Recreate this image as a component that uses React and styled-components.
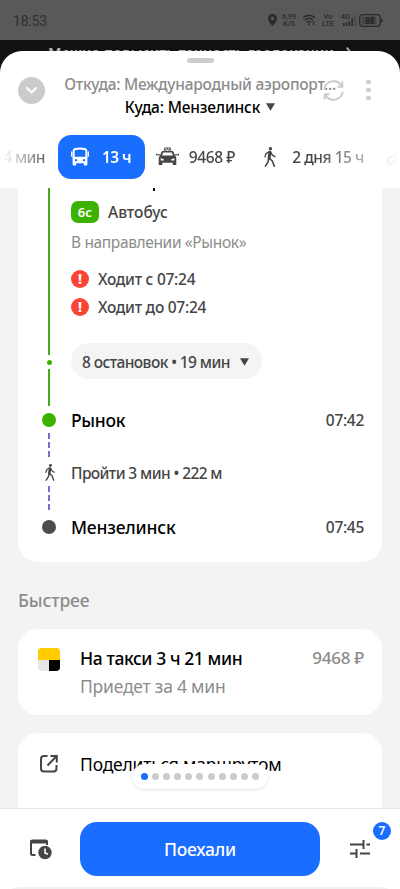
import { createGlobalStyle, styled } from "styled-components";

const GlobalStyle = createGlobalStyle`
  * { box-sizing: border-box; }
  body {
    margin: 0;
    background: #f3f3f3;
    font-family: "Noto Sans", "Open Sans", sans-serif;
  }
`;

const Screen = styled.div`
  width: 400px;
  height: 889px;
  display: flex;
  flex-direction: column;
  overflow: hidden;
  background: #f3f3f3;
`;

const StatusBar = styled.div`
  height: 40px;
  flex: none;
  display: flex;
  align-items: center;
  justify-content: space-between;
  padding: 0 17px 0 13px;
  background: #595959;
  color: #2f2f2f;
  font-family: Roboto, sans-serif;
`;

const Clock = styled.span`
  font-size: 14px;
  letter-spacing: -0.2px;
  line-height: 40px;
  padding-top: 1px;
`;

const StatusIcons = styled.div`
  display: flex;
  align-items: center;
`;

const Tiny = styled.span`
  width: ${(p) => p.$width}px;
  margin-left: ${(p) => p.$gap}px;
  font-size: 7.5px;
  font-weight: 600;
  line-height: 7px;
  text-align: center;
  white-space: pre-line;
`;

const Top = styled.div`
  height: 148px;
  flex: none;
  display: flex;
  flex-direction: column;
  overflow: hidden;
  background: #111;
`;

const Notice = styled.div`
  height: 11px;
  flex: none;
  display: flex;
  justify-content: center;
  gap: 12px;
  overflow: hidden;
  color: #b5b5b5;
  font-size: 14.5px;
  font-weight: 600;
  line-height: 24px;
  white-space: nowrap;
`;

const Sheet = styled.div`
  flex: 1;
  display: flex;
  flex-direction: column;
  border-radius: 22px 22px 0 0;
  background: #fff;
`;

const Grip = styled.div`
  width: 27px;
  height: 5px;
  margin: 6.5px auto 0;
  border-radius: 3px;
  background: #cdcdcd;
`;

const Header = styled.div`
  height: 55px;
  display: grid;
  grid-template-columns: 44px 276px 1fr;
  padding: 0 0 0 18px;
  margin-top: 9px;
`;

const RoundButton = styled.div`
  width: 27px;
  height: 27px;
  margin-top: 5.5px;
  border-radius: 50%;
  background: #cbcbcb;
  display: flex;
  align-items: center;
  justify-content: center;
`;

const Addresses = styled.div`
  display: flex;
  flex-direction: column;
  align-items: center;
  white-space: nowrap;
`;

const Text = styled.span`
  font-size: ${(p) => p.$size || 15.5}px;
  font-weight: ${(p) => p.$weight || 400};
  letter-spacing: ${(p) => p.$track || 0}px;
  line-height: ${(p) => p.$line || 24}px;
  color: ${(p) => p.$color || "#454545"};
  white-space: nowrap;
`;

const Inline = styled.div`
  display: flex;
  align-items: center;
  gap: ${(p) => p.$gap || 0}px;
`;

const HeaderActions = styled.div`
  display: flex;
  align-items: flex-start;
  gap: 22px;
  margin-left: -15px;
  padding-top: 8px;
`;

const Tabs = styled.div`
  display: flex;
  align-items: center;
  height: 44px;
  margin-top: 8px;
  overflow: hidden;
  mask-image: linear-gradient(90deg, transparent 2px, #000 56px, #000 315px, transparent 398px);
`;

const Tab = styled.div`
  width: ${(p) => p.$width}px;
  height: 44px;
  flex: none;
  display: flex;
  align-items: center;
  justify-content: space-between;
  margin-left: ${(p) => p.$gap}px;
  padding: 0 ${(p) => (p.$active ? "14px 0 13px" : "0")};
  border-radius: 13px;
  background: ${(p) => (p.$active ? "#196dff" : "transparent")};
`;

const Content = styled.div`
  flex: 1;
  min-height: 0;
  overflow: hidden;
  padding: 0 18px;
`;

const RouteCard = styled.div`
  height: 374px;
  padding: 0 18px;
  border-radius: 0 0 20px 20px;
  background: #fff;
`;

const RouteRow = styled.div`
  height: ${(p) => p.$height}px;
  display: grid;
  grid-template-columns: 26px 1fr auto;
  column-gap: 9px;
  align-items: ${(p) => p.$align || "center"};
`;

const Rail = styled.div`
  display: flex;
  flex-direction: column;
  align-items: center;
`;

const Line = styled.div`
  width: 2.4px;
  height: ${(p) => p.$height}px;
  background: #43ad1c;
`;

const Dot = styled.div`
  width: ${(p) => p.$size}px;
  height: ${(p) => p.$size}px;
  margin: ${(p) => p.$margin || 0}px 0;
  border-radius: 50%;
  background: ${(p) => p.$color};
`;

const Dashes = styled.div`
  width: 2.4px;
  height: 24px;
  background: repeating-linear-gradient(#7272cc 0 6px, transparent 6px 9px);
`;

const RailIcon = styled.div`
  height: 29px;
  display: flex;
  align-items: center;
  padding: 1px 0 0 2px;
`;

const Leg = styled.div`
  display: flex;
  flex-direction: column;
  align-items: flex-start;
`;

// tail of the stop name that is scrolled under the sheet header
const ScrolledName = styled.div`
  width: 2px;
  height: 3px;
  margin-left: 82px;
  background: #111;
`;

const LineBadge = styled.div`
  width: 27.5px;
  height: 22px;
  display: flex;
  align-items: center;
  justify-content: center;
  border-radius: 7px;
  background: #3cb200;
`;

const LegName = styled(Inline)`
  height: 22px;
  margin-top: 10px;
`;

const Direction = styled.div`
  height: 24px;
  margin: 7px 0 10.5px;
`;

const Alert = styled(Inline)`
  height: 28.5px;
`;

const AlertMark = styled.div`
  width: 18px;
  height: 18px;
  display: flex;
  justify-content: center;
  border-radius: 50%;
  background: #fc4436;
  color: #fff;
  font-size: 14px;
  font-weight: 800;
  line-height: 18px;
`;

const StopsChip = styled.div`
  width: 191px;
  height: 36px;
  display: flex;
  align-items: center;
  justify-content: space-between;
  margin-top: 21.5px;
  padding: 1px 13px 0 11px;
  border-radius: 18px;
  background: #f4f4f4;
`;

const WalkInfo = styled.div`
  padding-top: 2px;
`;

const SectionTitle = styled.div`
  height: 24px;
  margin: 26px 0 17px;
`;

const Card = styled.div`
  height: ${(p) => p.$height}px;
  display: grid;
  grid-template-columns: 44px 1fr auto;
  align-items: start;
  padding: ${(p) => p.$top || 17}px 18px 0;
  margin-bottom: 18px;
  border-radius: 20px;
  background: #fff;
`;

const CardIcon = styled.div`
  display: flex;
  padding: 1px 0 0 1.5px;
`;

const TaxiLogo = styled.div`
  width: 22.5px;
  height: 22.5px;
  margin-top: 1px;
  display: grid;
  grid-template-columns: 1fr 1fr;
  grid-template-rows: 12px 11px;
  border-radius: 4px;
  overflow: hidden;
  background: #e6e6e6;

  &::before {
    content: "";
    grid-column: 1 / 3;
    background: #ffcc00;
  }

  &::after {
    content: "";
    grid-column: 2;
    background: #000;
  }
`;

const Stack = styled.div`
  display: flex;
  flex-direction: column;
  gap: 4px;
`;

const Footer = styled.div`
  position: relative;
  height: 81px;
  flex: none;
  display: grid;
  grid-template-columns: 80px 240px 80px;
  grid-template-rows: 54px;
  padding-top: 13px;
  align-items: center;
  justify-items: center;
  border-top: 1px solid #e6e6e6;
  background: #fff;
`;

const Pager = styled.div`
  position: absolute;
  left: 132px;
  top: -45px;
  width: 136px;
  height: 25px;
  display: flex;
  align-items: center;
  justify-content: space-between;
  padding: 0 9px;
  border-radius: 13px;
  background: #fff;
  box-shadow: 0 1px 3px rgba(0, 0, 0, 0.12);
`;

const GoButton = styled.div`
  width: 240px;
  height: 54px;
  display: flex;
  align-items: center;
  justify-content: center;
  border-radius: 17px;
  background: #196dff;
`;

const CountBadge = styled.div`
  position: absolute;
  left: 373px;
  top: 13px;
  width: 18px;
  height: 18px;
  border-radius: 50%;
  background: #196dff;
  color: #fff;
  font-size: 12px;
  font-weight: 600;
  line-height: 18px;
  text-align: center;
`;

const NextPanel = styled.div`
  position: absolute;
  left: 0;
  bottom: -20px;
  width: 400px;
  height: 22px;
  border-radius: 20px 20px 0 0;
  background: #f1f1f1;
`;

const More = styled.div`
  display: flex;
  flex-direction: column;
  gap: 3.5px;
`;

const Triangle = () => (
  <svg width="9" height="8" viewBox="0 0 9 8">
    <path d="M0 0.3h9L4.5 7.8Z" fill="#454545" />
  </svg>
);

const Walker = ({ height = 20, color = "#454545" }) => (
  <svg width={height * 0.6} height={height} viewBox="0 0 12 20" fill="none" stroke={color} strokeLinecap="round" strokeLinejoin="round">
    <circle cx="6.4" cy="1.8" r="1.7" fill={color} stroke="none" />
    <path d="M5.9 5.2 5.1 11.2" strokeWidth="3" />
    <path d="M5 4.8 1.8 6.8 1.1 9.8M6.8 5.3 8.4 8.2 11 9.6" strokeWidth="1.4" />
    <path d="M5.6 11.5 8.4 14.2 10.3 19.1M4.6 11.5 4.2 14.6 1.4 19.1" strokeWidth="1.6" />
  </svg>
);

const Bus = () => (
  <svg width="18" height="19" viewBox="0 0 18 19">
    <path d="M2.600 10.500V4.200Q2.600 2.400 4.300 2 9 .9 13.700 2q1.700.4 1.700 2.200v6.300" fill="none" stroke="#fff" strokeWidth="2" />
    <path d="M.7 4.800v4.400M17.300 4.800v4.400" stroke="#fff" strokeWidth="1.300" strokeLinecap="round" />
    <path fillRule="evenodd" d="M1.600 9.800h14.800V17.500q0 1-1 1h-1.600q-1 0-1-1v-1.300H5.200v1.300q0 1-1 1H2.600q-1 0-1-1ZM5 11.900a1.200 1.200 0 1 0 .01 0ZM13 11.900a1.200 1.200 0 1 0 .01 0Z" fill="#fff" />
  </svg>
);

const Taxi = () => (
  <svg width="23" height="19" viewBox="0 0 23 19" fill="#454545">
    <path d="M7.600 3.600 8.600.6h5.800l1 3Z" />
    <path d="M9.400 1.300h1.400v1.100H9.400ZM12.200 1.300h1.400v1.100h-1.400ZM10.800 2.400h1.400v1h-1.400Z" fill="#fff" />
    <path fillRule="evenodd" d="M7 4h9q1.200 0 1.700 1.200l1.200 3.100q1.400 1.400 1.400 3.200V18h-3.600v-2.300H6.300V18H2.700v-6.500q0-1.800 1.400-3.200l1.200-3.100Q5.800 4 7 4ZM7.200 5.600 6 8.600h11l-1.200-3ZM4.700 11l3.200 1.500v1H4.700ZM18.300 11l-3.200 1.500v1h3.200Z" />
    <path d="M0 6.700h1.600v1.800H0ZM21.400 6.700H23v1.800h-1.600ZM2.200 7h1.800l-.6 1.500H2.200ZM20.800 7H19l.6 1.500h1.200Z" />
  </svg>
);

const Bike = () => (
  <svg width="24" height="18" viewBox="0 0 24 18" fill="none" stroke="#454545" strokeWidth="1.600">
    <circle cx="5" cy="12.500" r="4" />
    <circle cx="19" cy="12.500" r="4" />
    <path d="M5 12.500H12L16 4h2M7 9 9 5M7 5h4" />
  </svg>
);

const Refresh = () => (
  <svg width="21" height="21" viewBox="0 0 21 21" fill="none" stroke="#cbcbcb" strokeWidth="1.900">
    <path d="M1.300 9.500A9.200 9.200 0 0 1 18.500 6M19.700 11.500A9.200 9.200 0 0 1 2.500 15" />
    <path d="M19.300 1.500V6.700H14.500M1.700 19.500v-5.200h4.800" />
  </svg>
);

export default function App() {
  return (
    <Screen>
      <GlobalStyle />
      <StatusBar>
        <Clock>18:53</Clock>
        <StatusIcons>
          <svg width="9" height="12" viewBox="0 0 9 12">
            <path fillRule="evenodd" d="M4.500 0A4.400 4.400 0 0 1 9 4.500C9 7.500 4.500 12 4.500 12S0 7.500 0 4.500A4.400 4.400 0 0 1 4.500 0ZM4.500 2.800a1.700 1.700 0 1 0 .01 0Z" fill="#2b2b2b" />
          </svg>
          <Tiny $width={16} $gap={4.5}>{"6,99\nK/S"}</Tiny>
          <svg width="14" height="12" viewBox="0 0 14 12" fill="none" stroke="#2b2b2b" strokeWidth="1.300" style={{ marginLeft: 4.5 }}>
            <path d="M.7 4Q7-1.500 13.300 4M2.600 6.300Q7 2.300 11 6.100M4.500 8.500Q7 6.300 9 8.300" />
            <circle cx="6.800" cy="10.200" r="1" fill="#2b2b2b" stroke="none" />
            <path d="M11.500 7v4" />
          </svg>
          <Tiny $width={13} $gap={6}>{"Vo\nLTE"}</Tiny>
          <Tiny $width={10} $gap={6}>{"4G\n\u00a0"}</Tiny>
          <svg width="13" height="12" viewBox="0 0 13 12" fill="#2b2b2b" style={{ marginLeft: -8 }}>
            <path d="M0 9h1.600v3H0ZM2.800 8h1.600v4H2.800ZM5.600 7h1.600v5H5.600ZM8.400 4H10v8H8.400Z" />
            <path d="M11.400 1H13v11h-1.600Z" opacity=".4" />
          </svg>
          <svg width="24" height="13" viewBox="0 0 24 13" style={{ marginLeft: 3.5 }}>
            <rect x=".7" y=".7" width="20.600" height="11.600" rx="3" fill="none" stroke="#2b2b2b" strokeWidth="1.300" />
            <rect x="2.500" y="2.500" width="15" height="8" rx="1" fill="#474747" />
            <path d="M22 4.500q1.500 0 1.500 2t-1.500 2Z" fill="#2b2b2b" />
            <text x="10.800" y="9.500" textAnchor="middle" fontSize="8.500" fontWeight="700" fill="#222">88</text>
          </svg>
        </StatusIcons>
      </StatusBar>

      <Top>
        <Notice>
          <span>Можно повысить точность геолокации</span>
          <svg width="6" height="12" viewBox="0 0 6 12" fill="none" stroke="#b5b5b5" strokeWidth="1.800" style={{ marginTop: 7 }}>
            <path d="M.7.7 5 5.500.7 10.500" />
          </svg>
        </Notice>
        <Sheet>
          <Grip />
          <Header>
            <RoundButton>
              <svg width="11" height="7" viewBox="0 0 11 7" fill="none" stroke="#fff" strokeWidth="2" strokeLinecap="round" strokeLinejoin="round">
                <path d="M1 1 5.500 5.500 10 1" />
              </svg>
            </RoundButton>
            <Addresses>
              <Text $color="#8c8c8c" $weight={500} $track={-0.26}>Откуда: Международный аэропорт...</Text>
              <Inline $gap={6}>
                <Text $color="#000" $weight={500} $track={-0.17} $line={23}>Куда: Мензелинск</Text>
                <Triangle />
              </Inline>
            </Addresses>
            <HeaderActions>
              <Refresh />
              <More>
                <Dot $size={4.5} $color="#cbcbcb" />
                <Dot $size={4.5} $color="#cbcbcb" />
                <Dot $size={4.5} $color="#cbcbcb" />
              </More>
            </HeaderActions>
          </Header>
          <Tabs>
            <Tab $width={49} $gap={-5}>
              <Text $weight={500} $track={-0.6}>24 мин</Text>
            </Tab>
            <Tab $width={87} $gap={14} $active>
              <Bus />
              <Text $size={15.5} $weight={600} $track={-0.6} $color="#fff">13 ч</Text>
            </Tab>
            <Tab $width={79} $gap={11}>
              <Taxi />
              <Text $weight={500} $track={-0.4}>9468 ₽</Text>
            </Tab>
            <Tab $width={100} $gap={29}>
              <Walker height={20} />
              <Text $weight={500} $track={-0.45}>2 дня 15 ч</Text>
            </Tab>
            <Tab $width={24} $gap={23}>
              <Bike />
            </Tab>
          </Tabs>
        </Sheet>
      </Top>

      <Content>
        <RouteCard>
          <RouteRow $height={218} $align="start">
            <Rail>
              <Line $height={167} />
              <Dot $size={5} $margin={4.5} $color="#3cb200" />
              <Line $height={37} />
            </Rail>
            <Leg>
              <ScrolledName />
              <LegName $gap={9.5}>
                <LineBadge>
                  <Text $size={13} $weight={600} $color="#fff">6с</Text>
                </LineBadge>
                <Text $weight={500} $track={0}>Автобус</Text>
              </LegName>
              <Direction>
                <Text $color="#8c8c8c" $track={-0.36}>В направлении «Рынок»</Text>
              </Direction>
              <Alert $gap={9}>
                <AlertMark>!</AlertMark>
                <Text $weight={500} $track={-0.26}>Ходит с 07:24</Text>
              </Alert>
              <Alert $gap={9}>
                <AlertMark>!</AlertMark>
                <Text $weight={500} $track={-0.26}>Ходит до 07:24</Text>
              </Alert>
              <StopsChip>
                <Text $weight={500} $track={-0.58}>8 остановок • 19 мин</Text>
                <Triangle />
              </StopsChip>
            </Leg>
          </RouteRow>
          <RouteRow $height={27}>
            <Rail>
              <Dot $size={14} $color="#3cb200" />
            </Rail>
            <Text $size={17.5} $weight={500} $track={-0.3} $color="#000">Рынок</Text>
            <Text $weight={500} $track={-0.3}>07:42</Text>
          </RouteRow>
          <RouteRow $height={77}>
            <Rail>
              <Dashes />
              <RailIcon>
                <Walker height={17} />
              </RailIcon>
              <Dashes />
            </Rail>
            <WalkInfo>
              <Text $weight={500} $track={-0.6}>Пройти 3 мин • 222 м</Text>
            </WalkInfo>
          </RouteRow>
          <RouteRow $height={33}>
            <Rail>
              <Dot $size={14} $color="#4d4d4d" />
            </Rail>
            <Text $size={17.5} $weight={500} $track={-0.2} $color="#000">Мензелинск</Text>
            <Text $weight={500} $track={-0.3}>07:45</Text>
          </RouteRow>
        </RouteCard>

        <SectionTitle>
          <Text $size={17.5} $color="#8c8c8c" $weight={500} $track={-0.1}>Быстрее</Text>
        </SectionTitle>

        <Card $height={86}>
          <CardIcon>
            <TaxiLogo />
          </CardIcon>
          <Stack>
            <Text $size={17.5} $weight={500} $track={-0.4} $color="#000">На такси 3 ч 21 мин</Text>
            <Text $size={17.5} $track={-0.22} $color="#8c8c8c">Приедет за 4 мин</Text>
          </Stack>
          <Text $size={17} $weight={500} $track={-0.25} $color="#8c8c8c">9468 ₽</Text>
        </Card>

        <Card $height={96} $top={18.5}>
          <CardIcon>
            <svg width="22" height="22" viewBox="0 0 22 22" fill="none" stroke="#454545" strokeWidth="2">
              <path d="M9.500 3H6Q3 3 3 6v9.500q0 3 3 3h9.500q3 0 3-3V12" />
              <path d="M9.500 12.500 18.500 3.200M12.500 3h6.300V9.500" />
            </svg>
          </CardIcon>
          <Text $size={17.5} $track={-0.2} $color="#000">Поделиться маршрутом</Text>
        </Card>
      </Content>

      <Footer>
        <svg width="24" height="22" viewBox="0 0 24 22">
          <path d="M7.500 17H4.500Q3 17 3 15.500V3.500H19V7" fill="none" stroke="#454545" strokeWidth="2" />
          <path d="M2 4.500Q2 1.500 4.500 1.500h13Q20 1.500 20 4v1.500H2Z" fill="#454545" />
          <circle cx="17" cy="14.500" r="6.700" fill="#454545" />
          <path d="M17 10.500v4.500l3 1.200" fill="none" stroke="#fff" strokeWidth="1.600" />
        </svg>
        <GoButton>
          <Text $size={17.5} $weight={500} $track={-0.2} $color="#fff">Поехали</Text>
        </GoButton>
        <svg width="20" height="18" viewBox="0 0 20 18" fill="none" stroke="#454545" strokeWidth="2">
          <path d="M0 4.500h13M16.500 4.500H20M13.500 0v9M0 13.500h6M6.500 9v9M10 13.500h10" />
        </svg>
        <Pager>
          {Array.from({ length: 11 }, (_, i) => (
            <Dot key={i} $size={7} $color={i === 0 ? "#196dff" : "#cbcbcb"} />
          ))}
        </Pager>
        <CountBadge>7</CountBadge>
        <NextPanel />
      </Footer>
    </Screen>
  );
}
